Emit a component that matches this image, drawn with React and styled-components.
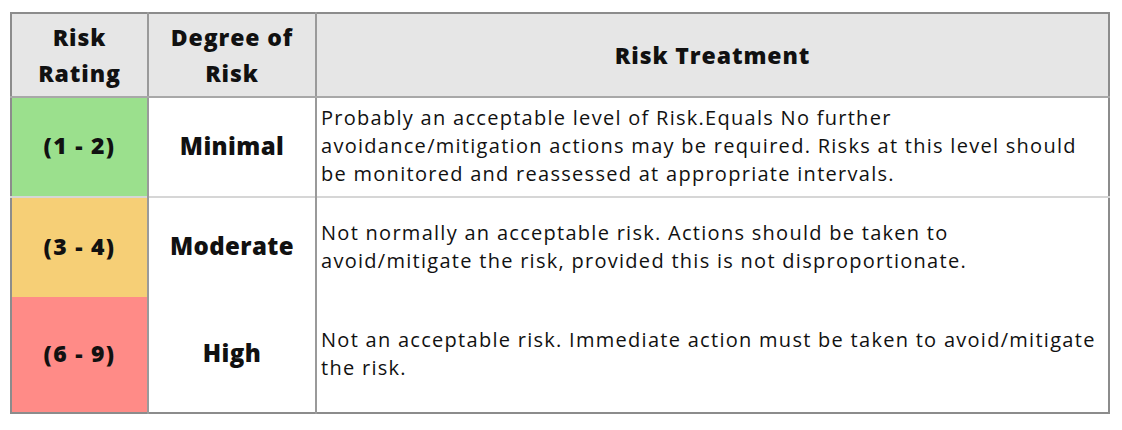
import React from 'react';
import styled, { createGlobalStyle } from 'styled-components';

const GlobalStyle = createGlobalStyle`
  body {
    margin: 0;
    background: #ffffff;
    font-family: "Open Sans", Lato, sans-serif;
  }
`;

const Page = styled.div`
  padding: 12px 0 0 10px;
`;

const Table = styled.table`
  width: 1100px;
  border-collapse: collapse;
  border: 2px solid #8c8c8c;
  table-layout: fixed;
  color: #111;
`;

const HeadCell = styled.th`
  background: #e6e6e6;
  height: 82px;
  padding: 0;
  font-size: 23px;
  line-height: 36px;
  font-weight: 800;
  letter-spacing: 0.9px;
  text-align: center;
  vertical-align: middle;
  border-left: 2px solid #9a9a9a;
  border-bottom: 2px solid #a8a8a8;
  &:first-child {
    border-left: none;
  }
`;

const Row = styled.tr`
  height: ${(p) => p.$h}px;
  & + & td {
    border-top: 2px solid #d6d6d6;
  }
`;

const RatingCell = styled.td`
  background: ${(p) => p.$bg};
  text-align: center;
  font-size: 23px;
  font-weight: 800;
  letter-spacing: 1.3px;
  padding: 0 0 4px;
`;

const DegreeCell = styled.td`
  text-align: center;
  font-size: 24px;
  font-weight: 800;
  letter-spacing: 0.4px;
  padding: 0 0 4px;
  border-left: 2px solid #9a9a9a;
`;

const TreatmentCell = styled.td`
  font-size: 20px;
  line-height: 28px;
  font-weight: 500;
  letter-spacing: 1.28px;
  padding: 0 4px 2px;
  border-left: 2px solid #9a9a9a;
  text-align: left;
`;

const rows = [
  {
    rating: '(1 - 2)',
    color: '#9be08d',
    degree: 'Minimal',
    h: 100,
    lines: [
      'Probably an acceptable level of Risk.Equals No further',
      'avoidance/mitigation actions may be required. Risks at this level should',
      'be monitored and reassessed at appropriate intervals.',
    ],
  },
  {
    rating: '(3 - 4)',
    color: '#f6cf76',
    degree: 'Moderate',
    h: 100,
    lines: [
      'Not normally an acceptable risk. Actions should be taken to',
      'avoid/mitigate the risk, provided this is not disproportionate.',
    ],
  },
  {
    rating: '(6 - 9)',
    color: '#ff8b87',
    degree: 'High',
    h: 116,
    lines: [
      'Not an acceptable risk. Immediate action must be taken to avoid/mitigate',
      'the risk.',
    ],
  },
];

const App = () => (
  <>
    <GlobalStyle />
    <Page>
      <Table>
        <colgroup>
          <col style={{ width: 137 }} />
          <col style={{ width: 168 }} />
          <col />
        </colgroup>
        <thead>
          <tr>
            <HeadCell>Risk<br />Rating</HeadCell>
            <HeadCell>Degree of<br />Risk</HeadCell>
            <HeadCell>Risk Treatment</HeadCell>
          </tr>
        </thead>
        <tbody>
          {rows.map((r) => (
            <Row key={r.rating} $h={r.h}>
              <RatingCell $bg={r.color}>{r.rating}</RatingCell>
              <DegreeCell>{r.degree}</DegreeCell>
              <TreatmentCell>
                {r.lines.map((l, i) => (
                  <React.Fragment key={i}>
                    {l}
                    {i < r.lines.length - 1 && <br />}
                  </React.Fragment>
                ))}
              </TreatmentCell>
            </Row>
          ))}
        </tbody>
      </Table>
    </Page>
  </>
);

export default App;
